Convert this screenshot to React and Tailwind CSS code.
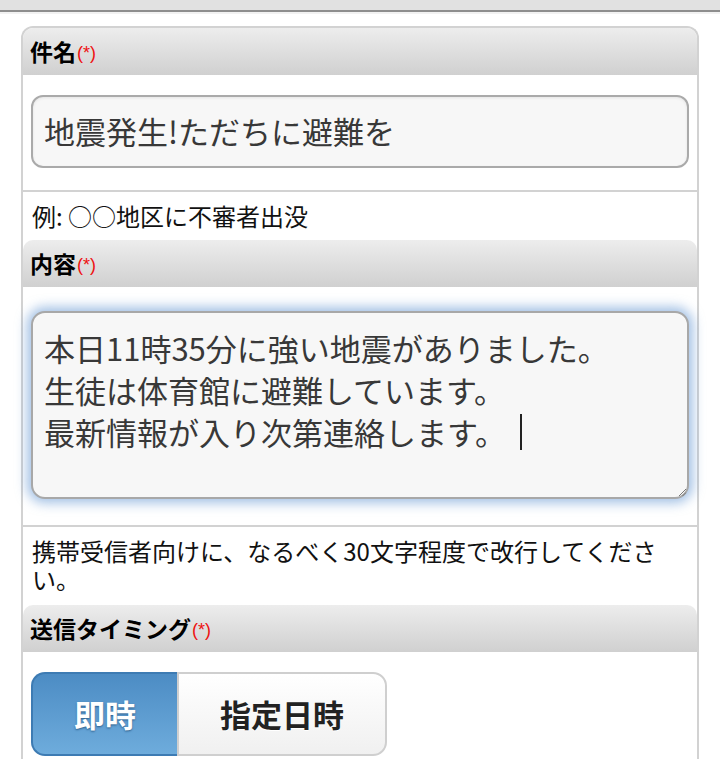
import React from "react";

const font = { fontFamily: '"Noto Sans CJK JP", "Noto Sans", sans-serif' };

function SectionHeader({ label }) {
  return (
    <div className="h-[47px] flex items-center px-[7px] rounded-t-[10px] bg-gradient-to-b from-[#ededed] to-[#d0d0d0]">
      <span className="text-[23px] font-bold text-black">{label}</span>
      <span className="text-[18px] text-[#ee1111] ml-[1px] mt-[4px]" style={{ fontFamily: '"Liberation Sans", sans-serif' }}>(*)</span>
    </div>
  );
}

export default function App() {
  return (
    <div className="min-h-[759px] bg-white" style={font}>
      <div className="h-[10px] bg-[#e1e1e1]" />
      <div className="h-[2px] bg-[#8e8e8e]" />
      <div className="h-[2px] bg-[#f2f2f2]" />

      <div className="mx-[21px] mt-[12px] border-2 border-b-0 border-[#d2d2d2] rounded-t-[12px]">
        <SectionHeader label="件名" />

        <div className="px-[8px] pt-[20px] pb-[22px]">
          <div className="h-[73px] border-2 border-[#aaaaaa] rounded-[12px] bg-[#f7f7f7] flex items-center px-[11px] shadow-[inset_0_1px_3px_rgba(0,0,0,0.08)]">
            <span className="text-[31px] text-[#383838]">地震発生!ただちに避難を</span>
          </div>
        </div>

        <div className="border-t-2 border-[#d2d2d2] px-[9px] py-[10px] text-[24px] leading-[28px] text-[#111]">
          例: ○○地区に不審者出没
        </div>

        <SectionHeader label="内容" />

        <div className="px-[8px] pt-[24px] pb-[26px]">
          <div className="relative h-[188px] border-2 border-[#a8a8a8] rounded-[14px] bg-[#f7f7f7] px-[11px] pt-[14px] shadow-[0_0_12px_4px_rgba(100,150,210,0.6)]">
            <div className="text-[31px] leading-[42px] text-[#383838]">
              <div>本日11時35分に強い地震がありました。</div>
              <div>生徒は体育館に避難しています。</div>
              <div className="flex items-center">
                最新情報が入り次第連絡します。
                <span className="inline-block w-[2px] h-[36px] bg-[#222] ml-[14px]" />
              </div>
            </div>
            <svg className="absolute right-[1px] bottom-[1px]" width="9" height="9" viewBox="0 0 9 9">
              <line x1="2" y1="9" x2="9" y2="2" stroke="#777" strokeWidth="1" />
              <line x1="5.5" y1="9" x2="9" y2="5.5" stroke="#777" strokeWidth="1" />
            </svg>
          </div>
        </div>

        <div className="border-t-2 border-[#d2d2d2] pl-[9px] pr-[24px] pt-[10px] pb-[12px] text-[24px] leading-[28px] text-[#111]">
          携帯受信者向けに、なるべく30文字程度で改行してください。
        </div>

        <SectionHeader label="送信タイミング" />

        <div className="px-[8px] pt-[20px] pb-[10px]">
          <div className="flex">
            <div className="w-[146px] h-[84px] flex items-center justify-center rounded-l-[14px] border-2 border-r-0 border-[#3d7bb3] bg-gradient-to-b from-[#4c8cc4] to-[#6eacdc] text-white text-[31px] font-bold [text-shadow:0_1px_2px_#2c5d8a]">
              即時
            </div>
            <div className="w-[210px] h-[84px] flex items-center justify-center rounded-r-[14px] border-2 border-[#cfcfcf] bg-gradient-to-b from-[#ffffff] to-[#f0f0f0] text-[#222] text-[31px] font-bold [text-shadow:0_1px_0_#ffffff]">
              指定日時
            </div>
          </div>
        </div>
      </div>
    </div>
  );
}
